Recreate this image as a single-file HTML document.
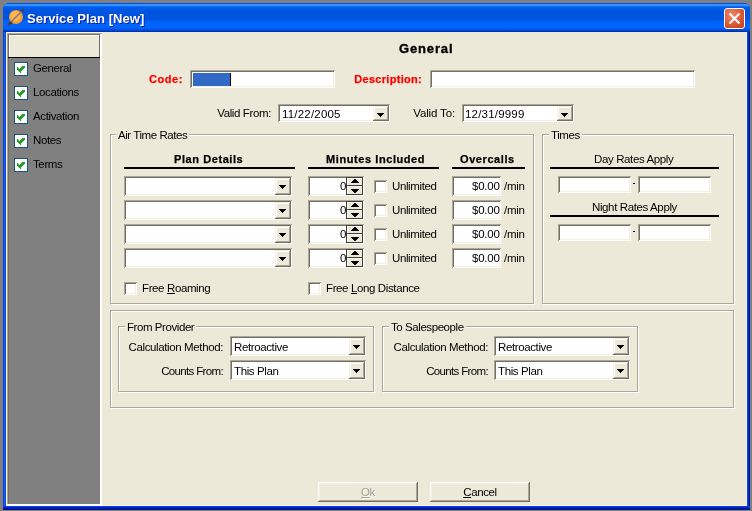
<!DOCTYPE html>
<html><head><meta charset="utf-8">
<style>
*{margin:0;padding:0;box-sizing:border-box}
html,body{width:752px;height:511px;overflow:hidden;will-change:transform;background:#808080;font-family:"Liberation Sans",sans-serif;font-size:11px;color:#000}
.a{position:absolute}
#win{position:absolute;left:3px;top:3px;width:747px;height:507px;background:#0434D0;border-radius:6px 6px 0 0;overflow:hidden}
#title{position:absolute;left:0;top:0;width:747px;height:29px;background:linear-gradient(#0050F0 0px,#0050F0 1px,#3D95F5 1px,#3D95F5 2px,#3090FF 2px,#3090FF 3px,#0A70FF 3px,#0A70FF 4px,#0060F0 4px,#0058E6 6px,#0053DC 10px,#0055E0 16px,#0062FA 19px,#0064FF 24px,#005EF8 26px,#0046D0 27px,#0046D0 28px,#0032B0 28px)}
#client{position:absolute;left:6px;top:32px;width:741px;height:474px;background:#ECE9D8}
.t{position:absolute;white-space:nowrap;line-height:13px;font-size:11.5px;letter-spacing:-0.38px}
.sunk{position:absolute;background:#fff;box-shadow:inset 1px 1px #ACA899,inset -1px -1px #fff,inset 2px 2px #716F64,inset -2px -2px #F1EFE2}
.cbtn{position:absolute;background:#ECE9D8;box-shadow:inset -1px -1px #716F64,inset 1px 1px #F1EFE2,inset -2px -2px #ACA899,inset 2px 2px #fff}
.btn{position:absolute;background:#ECE9D8;box-shadow:inset -1px -1px #716F64,inset 1px 1px #fff,inset -2px -2px #ACA899,inset 2px 2px #F1EFE2}
.tri{position:absolute;width:0;height:0;border-left:3.5px solid transparent;border-right:3.5px solid transparent;border-top:4px solid #000}
.grp{position:absolute;border:1px solid #ACA899;box-shadow:1px 1px #fff, inset 1px 1px #fff}
.lbl{position:absolute;background:#ECE9D8;padding:0 2px;white-space:nowrap;line-height:13px;font-size:11.5px;letter-spacing:-0.43px}
.cb{position:absolute;width:13px;height:13px;background:#fff;box-shadow:inset 1px 1px #ACA899,inset -1px -1px #fff,inset 2px 2px #716F64,inset -2px -2px #F1EFE2}
.xcb{position:absolute;width:14px;height:14px}
.spin{position:absolute;width:17px;height:18px;background:#ECE9D8;border:1px solid #404040;border-top:none}
.spin .up{position:absolute;left:0;top:1px;width:15px;height:7px;box-shadow:inset 1px 1px #fff}
.spin .dn{position:absolute;left:0;top:9px;width:15px;height:8px;box-shadow:inset 1px 1px #fff}
.spin .dv{position:absolute;left:0;top:8px;width:15px;height:1px;background:#404040}
.spin .ua{position:absolute;left:4px;top:2px;width:0;height:0;border-left:4.5px solid transparent;border-right:4.5px solid transparent;border-bottom:4px solid #000}
.spin .da{position:absolute;left:4px;top:12px;width:0;height:0;border-left:4.5px solid transparent;border-right:4.5px solid transparent;border-top:4px solid #000}
.hl{position:absolute;height:2px;background:#000}
.b{font-weight:bold;font-size:11px;letter-spacing:0.58px;-webkit-text-stroke:0.25px}
.d{letter-spacing:0.2px}
.d0{letter-spacing:-0.25px}
.r{color:#f00}
</style></head><body>
<div id="win">
  <div id="title">
    <svg class="a" style="left:3px;top:4px" width="20" height="20" viewBox="0 0 20 20">
      <circle cx="10" cy="10" r="7" fill="#F39A2E"/>
      <circle cx="9.3" cy="9.3" r="5.2" fill="#FFB850"/>
      <line x1="4.5" y1="15.5" x2="16" y2="4" stroke="#8A7A80" stroke-width="1.6"/>
      <line x1="2.5" y1="18" x2="5.5" y2="15" stroke="#5A3A1A" stroke-width="2.4"/>
      <line x1="15.5" y1="4.5" x2="17.5" y2="2.5" stroke="#5A3A1A" stroke-width="2"/>
    </svg>
    <div class="t" style="left:24px;top:8px;color:#fff;font-weight:bold;font-size:13px;line-height:15px;letter-spacing:0.06px;text-shadow:1px 1px #0A1EA0">Service Plan [New]</div>
    <div class="a" style="left:721px;top:5px;width:21px;height:21px;border:1px solid #fff;border-radius:3px;background:radial-gradient(circle at 35% 30%,#F08A6A,#D9542F 60%,#C2401E)">
      <svg class="a" style="left:0;top:0" width="19" height="19" viewBox="0 0 19 19"><path d="M4.5 4.5L14.5 14.5M14.5 4.5L4.5 14.5" stroke="#fff" stroke-width="2"/></svg>
    </div>
  </div>
</div>
<div class="a" style="left:3px;top:32px;width:1px;height:478px;background:#0838E0"></div>
<div class="a" style="left:4px;top:32px;width:1px;height:478px;background:#166AF0"></div>
<div class="a" style="left:5px;top:32px;width:1px;height:478px;background:#0842E0"></div>
<div class="a" style="left:747px;top:32px;width:1px;height:478px;background:#0A40E8"></div>
<div class="a" style="left:748px;top:32px;width:1px;height:478px;background:#0030C8"></div>
<div class="a" style="left:749px;top:32px;width:1px;height:478px;background:#001AA0"></div>
<div class="a" style="left:3px;top:506px;width:747px;height:1px;background:#0A3CF0"></div>
<div class="a" style="left:3px;top:507px;width:747px;height:1px;background:#0424C0"></div>
<div class="a" style="left:3px;top:508px;width:747px;height:1px;background:#001A98"></div>
<div class="a" style="left:3px;top:509px;width:747px;height:1px;background:#00188C"></div>
<div id="client"></div>
<div class="a" style="left:746px;top:32px;width:1px;height:474px;background:#F6F4DC"></div>
<div class="a" style="left:6px;top:505px;width:741px;height:1px;background:#F6F4DC"></div>

<div class="a" style="left:6px;top:32px;width:96px;height:474px;background:#F8F6EA"></div>
<div class="a" style="left:7px;top:33px;width:95px;height:471px;background:#ACA899"></div>
<div class="a" style="left:8px;top:34px;width:92px;height:470px;background:#716F64"></div>
<div class="a" style="left:9px;top:35px;width:91px;height:469px;background:#808080"></div>
<div class="a" style="left:8px;top:34px;width:92px;height:24px;background:#716F64"></div>
<div class="a" style="left:9px;top:35px;width:90px;height:22px;background:#fff"></div>
<div class="a" style="left:10px;top:36px;width:89px;height:21px;background:#ECE9D8"></div>
<div class="a" style="left:8px;top:57px;width:92px;height:1px;background:#000"></div>
<div class="a" style="left:100px;top:34px;width:2px;height:472px;background:#fff"></div>
<div class="a" style="left:6px;top:504px;width:96px;height:2px;background:#fff"></div>
<div class="xcb" style="left:14px;top:62px"><svg class="a" style="left:0;top:0" width="14" height="14" shape-rendering="crispEdges"><rect width="14" height="14" fill="#1C5180"/><rect x="1" y="1" width="12" height="12" fill="#fff"/><rect x="8" y="4" width="3" height="1" fill="#21A121"/><rect x="3" y="5" width="1" height="1" fill="#21A121"/><rect x="7" y="5" width="4" height="1" fill="#21A121"/><rect x="3" y="6" width="2" height="1" fill="#21A121"/><rect x="6" y="6" width="4" height="1" fill="#21A121"/><rect x="3" y="7" width="6" height="1" fill="#21A121"/><rect x="4" y="8" width="4" height="1" fill="#21A121"/><rect x="5" y="9" width="2" height="1" fill="#21A121"/><rect x="6" y="10" width="1" height="1" fill="#21A121"/></svg></div>
<div class="t " style="left:33px;top:62px;">General</div>
<div class="xcb" style="left:14px;top:86px"><svg class="a" style="left:0;top:0" width="14" height="14" shape-rendering="crispEdges"><rect width="14" height="14" fill="#1C5180"/><rect x="1" y="1" width="12" height="12" fill="#fff"/><rect x="8" y="4" width="3" height="1" fill="#21A121"/><rect x="3" y="5" width="1" height="1" fill="#21A121"/><rect x="7" y="5" width="4" height="1" fill="#21A121"/><rect x="3" y="6" width="2" height="1" fill="#21A121"/><rect x="6" y="6" width="4" height="1" fill="#21A121"/><rect x="3" y="7" width="6" height="1" fill="#21A121"/><rect x="4" y="8" width="4" height="1" fill="#21A121"/><rect x="5" y="9" width="2" height="1" fill="#21A121"/><rect x="6" y="10" width="1" height="1" fill="#21A121"/></svg></div>
<div class="t " style="left:33px;top:86px;">Locations</div>
<div class="xcb" style="left:14px;top:110px"><svg class="a" style="left:0;top:0" width="14" height="14" shape-rendering="crispEdges"><rect width="14" height="14" fill="#1C5180"/><rect x="1" y="1" width="12" height="12" fill="#fff"/><rect x="8" y="4" width="3" height="1" fill="#21A121"/><rect x="3" y="5" width="1" height="1" fill="#21A121"/><rect x="7" y="5" width="4" height="1" fill="#21A121"/><rect x="3" y="6" width="2" height="1" fill="#21A121"/><rect x="6" y="6" width="4" height="1" fill="#21A121"/><rect x="3" y="7" width="6" height="1" fill="#21A121"/><rect x="4" y="8" width="4" height="1" fill="#21A121"/><rect x="5" y="9" width="2" height="1" fill="#21A121"/><rect x="6" y="10" width="1" height="1" fill="#21A121"/></svg></div>
<div class="t " style="left:33px;top:110px;">Activation</div>
<div class="xcb" style="left:14px;top:134px"><svg class="a" style="left:0;top:0" width="14" height="14" shape-rendering="crispEdges"><rect width="14" height="14" fill="#1C5180"/><rect x="1" y="1" width="12" height="12" fill="#fff"/><rect x="8" y="4" width="3" height="1" fill="#21A121"/><rect x="3" y="5" width="1" height="1" fill="#21A121"/><rect x="7" y="5" width="4" height="1" fill="#21A121"/><rect x="3" y="6" width="2" height="1" fill="#21A121"/><rect x="6" y="6" width="4" height="1" fill="#21A121"/><rect x="3" y="7" width="6" height="1" fill="#21A121"/><rect x="4" y="8" width="4" height="1" fill="#21A121"/><rect x="5" y="9" width="2" height="1" fill="#21A121"/><rect x="6" y="10" width="1" height="1" fill="#21A121"/></svg></div>
<div class="t " style="left:33px;top:134px;">Notes</div>
<div class="xcb" style="left:14px;top:158px"><svg class="a" style="left:0;top:0" width="14" height="14" shape-rendering="crispEdges"><rect width="14" height="14" fill="#1C5180"/><rect x="1" y="1" width="12" height="12" fill="#fff"/><rect x="8" y="4" width="3" height="1" fill="#21A121"/><rect x="3" y="5" width="1" height="1" fill="#21A121"/><rect x="7" y="5" width="4" height="1" fill="#21A121"/><rect x="3" y="6" width="2" height="1" fill="#21A121"/><rect x="6" y="6" width="4" height="1" fill="#21A121"/><rect x="3" y="7" width="6" height="1" fill="#21A121"/><rect x="4" y="8" width="4" height="1" fill="#21A121"/><rect x="5" y="9" width="2" height="1" fill="#21A121"/><rect x="6" y="10" width="1" height="1" fill="#21A121"/></svg></div>
<div class="t " style="left:33px;top:158px;">Terms</div>
<div class="t b" style="left:399px;top:41px;font-size:13px;line-height:15px;letter-spacing:0.85px;-webkit-text-stroke:0.35px">General</div>
<div class="t b r" style="right:569px;top:73px;">Code:</div>
<div class="sunk" style="left:190px;top:70px;width:145px;height:18px;"></div>
<div class="a" style="left:193px;top:73px;width:37px;height:13px;background:#316AC5"></div>
<div class="a" style="left:230px;top:73px;width:1px;height:13px;background:#000"></div>
<div class="t b r" style="right:330px;top:73px;letter-spacing:0.3px">Description:</div>
<div class="sunk" style="left:430px;top:70px;width:265px;height:18px;"></div>
<div class="t " style="right:481px;top:107px;">Valid From:</div>
<div class="sunk" style="left:278px;top:104px;width:112px;height:18px;"></div>
<div class="t d" style="left:282px;top:108px;">11/22/2005</div>
<div class="cbtn" style="left:373px;top:106px;width:16px;height:15px"></div>
<svg class="a" style="left:377px;top:113px" width="7" height="4" shape-rendering="crispEdges"><path d="M0 0h7v1h-1v1h-1v1h-1v1h-1v-1h-1v-1h-1v-1h-1z" fill="#000"/></svg>
<div class="t " style="right:297px;top:107px;letter-spacing:-0.15px">Valid To:</div>
<div class="sunk" style="left:462px;top:104px;width:112px;height:18px;"></div>
<div class="t d" style="left:465px;top:108px;">12/31/9999</div>
<div class="cbtn" style="left:557px;top:106px;width:16px;height:15px"></div>
<svg class="a" style="left:561px;top:113px" width="7" height="4" shape-rendering="crispEdges"><path d="M0 0h7v1h-1v1h-1v1h-1v1h-1v-1h-1v-1h-1v-1h-1z" fill="#000"/></svg>
<div class="grp" style="left:110px;top:134px;width:424px;height:170px"></div>
<div class="lbl" style="left:116px;top:129px">Air Time Rates</div>
<div class="t b" style="left:174px;top:153px">Plan Details</div>
<div class="hl" style="left:124px;top:167px;width:171px"></div>
<div class="t b" style="left:326px;top:153px">Minutes Included</div>
<div class="hl" style="left:308px;top:167px;width:131px"></div>
<div class="t b" style="left:460px;top:153px">Overcalls</div>
<div class="hl" style="left:452px;top:167px;width:73px"></div>
<div class="sunk" style="left:124px;top:176px;width:168px;height:20px;"></div>
<div class="cbtn" style="left:275px;top:178px;width:16px;height:17px"></div>
<svg class="a" style="left:279px;top:185px" width="7" height="4" shape-rendering="crispEdges"><path d="M0 0h7v1h-1v1h-1v1h-1v1h-1v-1h-1v-1h-1v-1h-1z" fill="#000"/></svg>
<div class="sunk" style="left:308px;top:176px;width:56px;height:20px;"></div>
<div class="t " style="left:340px;top:180px;">0</div>
<svg class="a" style="left:346px;top:177px" width="17" height="18" shape-rendering="crispEdges"><rect width="17" height="18" fill="#3C3C3C"/><rect x="1" y="1" width="15" height="7" fill="#ECE9D8"/><rect x="1" y="9" width="15" height="8" fill="#ECE9D8"/><rect x="1" y="1" width="15" height="1" fill="#fff"/><rect x="1" y="1" width="1" height="7" fill="#fff"/><rect x="1" y="9" width="15" height="1" fill="#fff"/><rect x="1" y="9" width="1" height="8" fill="#fff"/><path d="M8 2h2v1h1v1h1v1h1v1h-8v-1h1v-1h1v-1h1z" fill="#000"/><path d="M5 12h8v1h-1v1h-1v1h-1v1h-2v-1h-1v-1h-1v-1h-1z" fill="#000"/></svg>
<div class="cb" style="left:374px;top:180px"></div>
<div class="t " style="left:392px;top:180px;">Unlimited</div>
<div class="sunk" style="left:452px;top:176px;width:49px;height:20px;"></div>
<div class="t d0" style="left:472px;top:180px;">$0.00</div>
<div class="t d0" style="left:504px;top:180px;">/min</div>
<div class="sunk" style="left:124px;top:200px;width:168px;height:20px;"></div>
<div class="cbtn" style="left:275px;top:202px;width:16px;height:17px"></div>
<svg class="a" style="left:279px;top:209px" width="7" height="4" shape-rendering="crispEdges"><path d="M0 0h7v1h-1v1h-1v1h-1v1h-1v-1h-1v-1h-1v-1h-1z" fill="#000"/></svg>
<div class="sunk" style="left:308px;top:200px;width:56px;height:20px;"></div>
<div class="t " style="left:340px;top:204px;">0</div>
<svg class="a" style="left:346px;top:201px" width="17" height="18" shape-rendering="crispEdges"><rect width="17" height="18" fill="#3C3C3C"/><rect x="1" y="1" width="15" height="7" fill="#ECE9D8"/><rect x="1" y="9" width="15" height="8" fill="#ECE9D8"/><rect x="1" y="1" width="15" height="1" fill="#fff"/><rect x="1" y="1" width="1" height="7" fill="#fff"/><rect x="1" y="9" width="15" height="1" fill="#fff"/><rect x="1" y="9" width="1" height="8" fill="#fff"/><path d="M8 2h2v1h1v1h1v1h1v1h-8v-1h1v-1h1v-1h1z" fill="#000"/><path d="M5 12h8v1h-1v1h-1v1h-1v1h-2v-1h-1v-1h-1v-1h-1z" fill="#000"/></svg>
<div class="cb" style="left:374px;top:204px"></div>
<div class="t " style="left:392px;top:204px;">Unlimited</div>
<div class="sunk" style="left:452px;top:200px;width:49px;height:20px;"></div>
<div class="t d0" style="left:472px;top:204px;">$0.00</div>
<div class="t d0" style="left:504px;top:204px;">/min</div>
<div class="sunk" style="left:124px;top:224px;width:168px;height:20px;"></div>
<div class="cbtn" style="left:275px;top:226px;width:16px;height:17px"></div>
<svg class="a" style="left:279px;top:233px" width="7" height="4" shape-rendering="crispEdges"><path d="M0 0h7v1h-1v1h-1v1h-1v1h-1v-1h-1v-1h-1v-1h-1z" fill="#000"/></svg>
<div class="sunk" style="left:308px;top:224px;width:56px;height:20px;"></div>
<div class="t " style="left:340px;top:228px;">0</div>
<svg class="a" style="left:346px;top:225px" width="17" height="18" shape-rendering="crispEdges"><rect width="17" height="18" fill="#3C3C3C"/><rect x="1" y="1" width="15" height="7" fill="#ECE9D8"/><rect x="1" y="9" width="15" height="8" fill="#ECE9D8"/><rect x="1" y="1" width="15" height="1" fill="#fff"/><rect x="1" y="1" width="1" height="7" fill="#fff"/><rect x="1" y="9" width="15" height="1" fill="#fff"/><rect x="1" y="9" width="1" height="8" fill="#fff"/><path d="M8 2h2v1h1v1h1v1h1v1h-8v-1h1v-1h1v-1h1z" fill="#000"/><path d="M5 12h8v1h-1v1h-1v1h-1v1h-2v-1h-1v-1h-1v-1h-1z" fill="#000"/></svg>
<div class="cb" style="left:374px;top:228px"></div>
<div class="t " style="left:392px;top:228px;">Unlimited</div>
<div class="sunk" style="left:452px;top:224px;width:49px;height:20px;"></div>
<div class="t d0" style="left:472px;top:228px;">$0.00</div>
<div class="t d0" style="left:504px;top:228px;">/min</div>
<div class="sunk" style="left:124px;top:248px;width:168px;height:20px;"></div>
<div class="cbtn" style="left:275px;top:250px;width:16px;height:17px"></div>
<svg class="a" style="left:279px;top:257px" width="7" height="4" shape-rendering="crispEdges"><path d="M0 0h7v1h-1v1h-1v1h-1v1h-1v-1h-1v-1h-1v-1h-1z" fill="#000"/></svg>
<div class="sunk" style="left:308px;top:248px;width:56px;height:20px;"></div>
<div class="t " style="left:340px;top:252px;">0</div>
<svg class="a" style="left:346px;top:249px" width="17" height="18" shape-rendering="crispEdges"><rect width="17" height="18" fill="#3C3C3C"/><rect x="1" y="1" width="15" height="7" fill="#ECE9D8"/><rect x="1" y="9" width="15" height="8" fill="#ECE9D8"/><rect x="1" y="1" width="15" height="1" fill="#fff"/><rect x="1" y="1" width="1" height="7" fill="#fff"/><rect x="1" y="9" width="15" height="1" fill="#fff"/><rect x="1" y="9" width="1" height="8" fill="#fff"/><path d="M8 2h2v1h1v1h1v1h1v1h-8v-1h1v-1h1v-1h1z" fill="#000"/><path d="M5 12h8v1h-1v1h-1v1h-1v1h-2v-1h-1v-1h-1v-1h-1z" fill="#000"/></svg>
<div class="cb" style="left:374px;top:252px"></div>
<div class="t " style="left:392px;top:252px;">Unlimited</div>
<div class="sunk" style="left:452px;top:248px;width:49px;height:20px;"></div>
<div class="t d0" style="left:472px;top:252px;">$0.00</div>
<div class="t d0" style="left:504px;top:252px;">/min</div>
<div class="cb" style="left:124px;top:282px"></div>
<div class="t " style="left:142px;top:282px;">Free <u>R</u>oaming</div>
<div class="cb" style="left:308px;top:282px"></div>
<div class="t " style="left:326px;top:282px;">Free <u>L</u>ong Distance</div>
<div class="grp" style="left:542px;top:134px;width:192px;height:170px"></div>
<div class="lbl" style="left:549px;top:129px">Times</div>
<div class="t " style="left:594px;top:153px;">Day Rates Apply</div>
<div class="hl" style="left:550px;top:167px;width:169px"></div>
<div class="sunk" style="left:558px;top:176px;width:73px;height:17px;"></div>
<div class="a" style="left:633px;top:183px;width:2px;height:1px;background:#000"></div>
<div class="sunk" style="left:638px;top:176px;width:73px;height:17px;"></div>
<div class="t " style="left:592px;top:201px;">Night Rates Apply</div>
<div class="hl" style="left:550px;top:215px;width:169px"></div>
<div class="sunk" style="left:558px;top:224px;width:73px;height:17px;"></div>
<div class="a" style="left:633px;top:231px;width:2px;height:1px;background:#000"></div>
<div class="sunk" style="left:638px;top:224px;width:73px;height:17px;"></div>
<div class="grp" style="left:110px;top:310px;width:624px;height:98px"></div>
<div class="grp" style="left:118px;top:326px;width:256px;height:66px"></div>
<div class="lbl" style="left:125px;top:321px">From Provider</div>
<div class="t " style="right:529px;top:341px;">Calculation Method:</div>
<div class="sunk" style="left:230px;top:336px;width:136px;height:20px;"></div>
<div class="t " style="left:234px;top:341px;">Retroactive</div>
<div class="cbtn" style="left:349px;top:338px;width:16px;height:17px"></div>
<svg class="a" style="left:353px;top:345px" width="7" height="4" shape-rendering="crispEdges"><path d="M0 0h7v1h-1v1h-1v1h-1v1h-1v-1h-1v-1h-1v-1h-1z" fill="#000"/></svg>
<div class="t " style="right:529px;top:365px;letter-spacing:-0.65px">Counts From:</div>
<div class="sunk" style="left:230px;top:360px;width:136px;height:20px;"></div>
<div class="t " style="left:234px;top:365px;">This Plan</div>
<div class="cbtn" style="left:349px;top:362px;width:16px;height:17px"></div>
<svg class="a" style="left:353px;top:369px" width="7" height="4" shape-rendering="crispEdges"><path d="M0 0h7v1h-1v1h-1v1h-1v1h-1v-1h-1v-1h-1v-1h-1z" fill="#000"/></svg>
<div class="grp" style="left:382px;top:326px;width:256px;height:66px"></div>
<div class="lbl" style="left:389px;top:321px">To Salespeople</div>
<div class="t " style="right:264px;top:341px;">Calculation Method:</div>
<div class="sunk" style="left:494px;top:336px;width:136px;height:20px;"></div>
<div class="t " style="left:498px;top:341px;">Retroactive</div>
<div class="cbtn" style="left:613px;top:338px;width:16px;height:17px"></div>
<svg class="a" style="left:617px;top:345px" width="7" height="4" shape-rendering="crispEdges"><path d="M0 0h7v1h-1v1h-1v1h-1v1h-1v-1h-1v-1h-1v-1h-1z" fill="#000"/></svg>
<div class="t " style="right:264px;top:365px;letter-spacing:-0.65px">Counts From:</div>
<div class="sunk" style="left:494px;top:360px;width:136px;height:20px;"></div>
<div class="t " style="left:498px;top:365px;">This Plan</div>
<div class="cbtn" style="left:613px;top:362px;width:16px;height:17px"></div>
<svg class="a" style="left:617px;top:369px" width="7" height="4" shape-rendering="crispEdges"><path d="M0 0h7v1h-1v1h-1v1h-1v1h-1v-1h-1v-1h-1v-1h-1z" fill="#000"/></svg>
<div class="btn" style="left:318px;top:482px;width:100px;height:20px;"></div>
<div class="t" style="left:318px;top:486px;width:100px;text-align:center;color:#A09D8E;text-shadow:1px 1px #fff"><u>O</u>k</div>
<div class="btn" style="left:430px;top:482px;width:100px;height:20px;"></div>
<div class="t" style="left:430px;top:486px;width:100px;text-align:center"><u>C</u>ancel</div>
</body></html>
